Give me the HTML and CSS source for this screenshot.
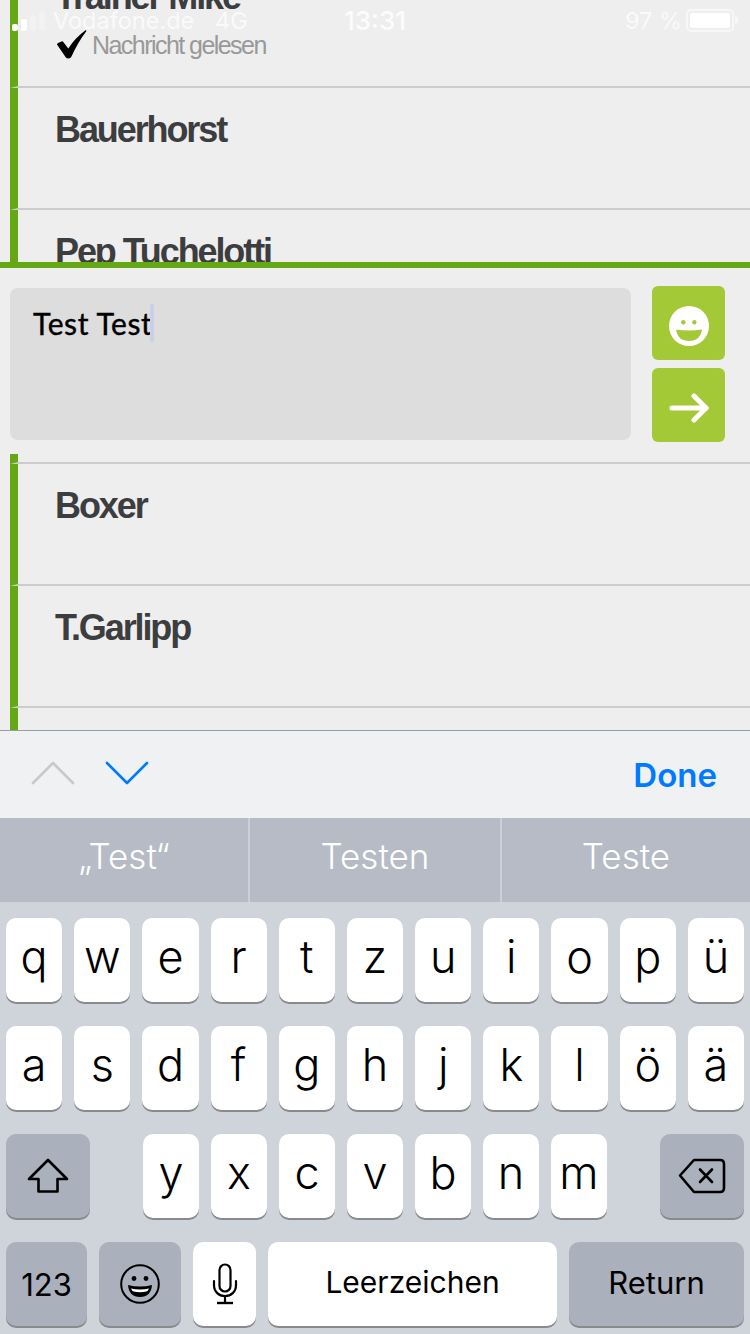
FILE: index.html
```html
<!DOCTYPE html>
<html lang="de">
<head>
    <meta charset="UTF-8">
    <meta name="viewport" content="width=device-width, initial-scale=1.0">
    <title>Nachrichten</title>
    <link rel="stylesheet" href="styles.css">
</head>
<body>
    <div class="screen">
        <!-- List above the compose box -->
        <div class="list-top">
            <div class="list-inner">
                <div class="row row-first">
                    <div class="name">Trainer Mike</div>
                    <div class="read-state">
                        <svg class="check" width="30" height="30" viewBox="0 0 30 30">
                            <path d="M0 14.5 Q0 13.5 1 13 L4.5 11.5 Q5.5 11 6.3 12 L11.3 18.5 Q18 8 28.5 0.3 Q29.6 0 29.3 1.2 Q21 12 14.5 26.5 Q13.5 28.6 11.5 28.6 Q9.5 28.6 8.5 27 Z" fill="#000"/>
                        </svg>
                        <span class="read-text">Nachricht gelesen</span>
                    </div>
                </div>
                <div class="row"><div class="name">Bauerhorst</div></div>
                <div class="row"><div class="name">Pep Tuchelotti</div></div>
            </div>
        </div>

        <!-- Compose box -->
        <div class="compose">
            <div class="input-box">
                <span class="input-text">Test Test</span><span class="caret"></span>
            </div>
            <div class="compose-buttons">
                <div class="green-btn">
                    <svg width="40" height="40" viewBox="0 0 40 40">
                        <circle cx="20" cy="20" r="20" fill="#fff"/>
                        <circle cx="14.3" cy="16.3" r="2.2" fill="#a4c936"/>
                        <circle cx="25.3" cy="16.3" r="2.2" fill="#a4c936"/>
                        <path d="M7 23.5 Q20 25.5 33 23.5 Q31 35 20 35 Q9 35 7 23.5 Z" fill="#a4c936"/>
                    </svg>
                </div>
                <div class="green-btn">
                    <svg width="40" height="30" viewBox="0 0 40 30" fill="none" stroke="#fff" stroke-width="5" stroke-linecap="round" stroke-linejoin="round">
                        <path d="M3 15 H37"/>
                        <path d="M25 3 L37 15 L25 27"/>
                    </svg>
                </div>
            </div>
        </div>

        <!-- List below the compose box -->
        <div class="list-bottom">
            <div class="row row-stub"></div>
            <div class="row"><div class="name">Boxer</div></div>
            <div class="row"><div class="name">T.Garlipp</div></div>
            <div class="row row-end"></div>
        </div>

        <!-- Keyboard accessory -->
        <div class="toolbar">
            <div class="arrows">
                <svg width="44" height="24" viewBox="0 0 44 24" fill="none" stroke="#c9c9cb" stroke-width="2.6" stroke-linecap="round" stroke-linejoin="round">
                    <path d="M2 22 L22 2 L42 22"/>
                </svg>
                <svg width="44" height="24" viewBox="0 0 44 24" fill="none" stroke="#007aff" stroke-width="2.6" stroke-linecap="round" stroke-linejoin="round">
                    <path d="M2 2 L22 22 L42 2"/>
                </svg>
            </div>
            <div class="done">Done</div>
        </div>

        <div class="suggestions">
            <div class="suggestion">„Test“</div>
            <div class="suggestion">Testen</div>
            <div class="suggestion">Teste</div>
        </div>

        <div class="keyboard">
            <div class="key-row key-grid">
                <div class="key">q</div><div class="key">w</div><div class="key">e</div><div class="key">r</div><div class="key">t</div><div class="key">z</div><div class="key">u</div><div class="key">i</div><div class="key">o</div><div class="key">p</div><div class="key">ü</div>
            </div>
            <div class="key-row key-grid">
                <div class="key">a</div><div class="key">s</div><div class="key">d</div><div class="key">f</div><div class="key">g</div><div class="key">h</div><div class="key">j</div><div class="key">k</div><div class="key">l</div><div class="key">ö</div><div class="key">ä</div>
            </div>
            <div class="key-row key-row-3">
                <div class="key key-dark key-side">
                    <svg width="42" height="36" viewBox="0 0 42 36" fill="none" stroke="#000" stroke-width="2.6" stroke-linejoin="round">
                        <path d="M21 2 L2 21 H11.5 V33.5 H30.5 V21 H40 Z"/>
                    </svg>
                </div>
                <div class="letters">
                    <div class="key">y</div><div class="key">x</div><div class="key">c</div><div class="key">v</div><div class="key">b</div><div class="key">n</div><div class="key">m</div>
                </div>
                <div class="key key-dark key-side">
                    <svg width="48" height="36" viewBox="0 0 48 36" fill="none" stroke="#000" stroke-width="2.6" stroke-linejoin="round" stroke-linecap="round">
                        <path d="M2 17.5 L16 2 H42 Q46 2 46 6 V30 Q46 34 42 34 H16 Z"/>
                        <path d="M22 11.5 L34 24 M34 11.5 L22 24"/>
                    </svg>
                </div>
            </div>
            <div class="key-row key-row-4">
                <div class="key key-dark key-123">123</div>
                <div class="key key-dark key-emoji">
                    <svg width="42" height="42" viewBox="0 0 42 42" fill="none">
                        <circle cx="21" cy="21" r="18.8" stroke="#000" stroke-width="2"/>
                        <circle cx="15" cy="15.5" r="2.4" fill="#000"/>
                        <circle cx="27" cy="15.5" r="2.4" fill="#000"/>
                        <path d="M9 22 Q21 25 33 22 Q32 34 21 34 Q10 34 9 22 Z" fill="#000"/>
                        <path d="M12 25.5 Q21 27.5 30 25.5 Q29 28 27.5 28.5 Q21 30 14.5 28.5 Q13 28 12 25.5 Z" fill="#fff"/>
                    </svg>
                </div>
                <div class="key key-mic">
                    <svg width="26" height="42" viewBox="0 0 26 42" fill="none" stroke="#000" stroke-width="2.2" stroke-linecap="round">
                        <rect x="7.5" y="1.5" width="11" height="27" rx="5.5"/>
                        <path d="M2 18 V22 C2 29 7 33 13 33 C19 33 24 29 24 22 V18"/>
                        <path d="M13 33 V39"/>
                        <path d="M5 40 H21" stroke-width="2.4" stroke-linecap="butt"/>
                    </svg>
                </div>
                <div class="key key-space">Leerzeichen</div>
                <div class="key key-dark key-return">Return</div>
            </div>
        </div>

        <!-- Status bar lies over the list -->
        <div class="status-bar">
            <div class="status-left">
                <div class="signal">
                    <span class="bar bar-1"></span>
                    <span class="bar bar-2"></span>
                    <span class="bar bar-3"></span>
                    <span class="bar bar-4"></span>
                </div>
                <span class="carrier">Vodafone.de</span>
                <span class="network">4G</span>
            </div>
            <div class="status-time">13:31</div>
            <div class="status-right">
                <span class="percent">97 %</span>
                <div class="battery"><div class="battery-fill"></div></div>
                <div class="battery-nub"></div>
            </div>
        </div>
    </div>
</body>
</html>
```

FILE: styles.css
```css
body {
    margin: 0;
    padding: 0;
    background-color: #eeeeee;
    font-family: "Liberation Sans", Arial, sans-serif;
}
.screen {
    position: relative;
    width: 750px;
    height: 1334px;
    overflow: hidden;
    display: flex;
    flex-direction: column;
    background-color: #eeeeee;
}

/* status bar */
.status-bar {
    position: absolute;
    top: 0;
    left: 0;
    width: 750px;
    height: 40px;
    display: grid;
    grid-template-columns: 1fr auto 1fr;
    align-items: center;
    font-family: Inter, "Liberation Sans", sans-serif;
    font-size: 23.5px;
    color: rgba(255,255,255,0.72);
}
.status-left {
    display: flex;
    align-items: center;
    padding-left: 12px;
}
.signal {
    display: flex;
    align-items: flex-end;
    gap: 3px;
    width: 41px;
    height: 20px;
    margin-top: 2px;
}
.bar {
    width: 6px;
    border-radius: 2px;
    background-color: rgba(255,255,255,0.25);
}
.bar-1 { height: 7px; background-color: #fff; }
.bar-2 { height: 12px; background-color: #fff; }
.bar-3 { height: 16px; }
.bar-4 { height: 20px; }
.carrier {
    width: 162px;
}
.status-time {
    font-size: 26px;
    color: rgba(255,255,255,0.85);
    font-weight: 500;
}
.status-right {
    display: flex;
    align-items: center;
    justify-content: flex-end;
    padding-right: 12px;
}
.percent {
    margin-right: 4px;
}
.battery {
    box-sizing: border-box;
    width: 48px;
    height: 23px;
    border: 2px solid rgba(255,255,255,0.5);
    border-radius: 5px;
    padding: 2px;
}
.battery-fill {
    height: 100%;
    background-color: #fff;
    border-radius: 2px;
}
.battery-nub {
    width: 3px;
    height: 8px;
    margin-left: 1px;
    background-color: rgba(255,255,255,0.5);
    border-radius: 0 3px 3px 0;
}

/* message lists */
.list-top {
    height: 262px;
    overflow: hidden;
    flex-shrink: 0;
}
.list-inner {
    margin-top: -45px;
}
.row {
    box-sizing: border-box;
    height: 122px;
    margin-left: 10px;
    padding: 20px 0 0 37px;
    border-left: 8px solid #64a814;
    border-bottom: 2px solid #cccccc;
}
.row-first {
    height: 133px;
}
.row-stub {
    height: 10px;
    padding: 0;
}
.row-end {
    height: 22px;
    padding: 0;
    border-bottom: 0;
}
.name {
    font-size: 36px;
    line-height: 44px;
    font-weight: bold;
    letter-spacing: -2.1px;
    color: #3c3d3f;
}
.read-state {
    display: flex;
    align-items: center;
    gap: 5px;
    margin-top: 11px;
}
.check {
    margin-left: 2px;
}
.read-text {
    font-size: 25px;
    letter-spacing: -1.55px;
    color: #999999;
}

/* compose box */
.compose {
    box-sizing: border-box;
    height: 192px;
    flex-shrink: 0;
    display: flex;
    gap: 21px;
    padding: 18px 25px 0 10px;
    border-top: 6px solid #64a814;
    background-color: #eeeeee;
}
.input-box {
    box-sizing: border-box;
    width: 621px;
    height: 152px;
    margin-top: 2px;
    padding: 16px 0 0 23px;
    display: flex;
    align-items: flex-start;
    background-color: #dddddd;
    border-radius: 8px;
}
.input-text {
    font-family: Lato, sans-serif;
    font-size: 30px;
    line-height: 38px;
    letter-spacing: 0.6px;
    color: #000;
    -webkit-text-stroke: 0.4px #000;
}
.caret {
    width: 4px;
    height: 38px;
    margin-left: -2px;
    background-color: #c9cfe6;
    border-radius: 2px;
}
.compose-buttons {
    display: flex;
    flex-direction: column;
    gap: 8px;
}
.green-btn {
    box-sizing: border-box;
    width: 73px;
    height: 74px;
    padding-top: 6px;
    display: flex;
    align-items: center;
    justify-content: center;
    background-color: #a4c936;
    border-radius: 6px;
}

.list-bottom {
    height: 276px;
    flex-shrink: 0;
}

/* keyboard */
.toolbar {
    box-sizing: border-box;
    height: 88px;
    flex-shrink: 0;
    display: flex;
    align-items: center;
    justify-content: space-between;
    padding: 0 33px 0 31px;
    border-top: 1px solid #999ea5;
    background-color: #f0f1f3;
}
.arrows {
    display: flex;
    gap: 30px;
    margin-top: -3px;
}
.done {
    font-family: Inter, "Liberation Sans", sans-serif;
    font-size: 33px;
    font-weight: 600;
    color: #007aff;
}
.suggestions {
    height: 84px;
    flex-shrink: 0;
    display: grid;
    grid-template-columns: 250px 252px 248px;
    background-color: #b6bbc5;
}
.suggestion {
    box-sizing: border-box;
    padding-bottom: 8px;
    display: flex;
    align-items: center;
    justify-content: center;
    border-right: 2px solid #ccd0d7;
    font-family: Inter, "Liberation Sans", sans-serif;
    font-size: 35px;
    font-weight: 300;
    color: #fff;
}
.suggestion:last-child {
    border-right: 0;
}
.keyboard {
    flex: 1;
    display: flex;
    flex-direction: column;
    gap: 24px;
    padding: 16px 6px 0;
    background-color: #cfd3da;
}
.key-row {
    height: 84px;
}
.key-grid {
    display: grid;
    grid-template-columns: repeat(11, 1fr);
    gap: 12px;
}
.key-row-3, .key-row-4 {
    display: flex;
    gap: 12px;
}
.key-row-3 {
    justify-content: space-between;
}
.letters {
    display: flex;
    gap: 12px;
}
.letters .key {
    width: 56px;
}
.key {
    box-sizing: border-box;
    padding-bottom: 8px;
    display: flex;
    align-items: center;
    justify-content: center;
    background-color: #fff;
    border-radius: 10px;
    box-shadow: 0 2px 0 #898a8d;
    font-family: Inter, "Liberation Sans", sans-serif;
    font-size: 45px;
    font-weight: 300;
    color: #000;
}
.key-dark {
    background-color: #aab1bc;
}
.key-side {
    width: 84px;
    padding-bottom: 0;
}
.key-emoji, .key-mic {
    padding-bottom: 0;
}
.key-123 { width: 81px; font-size: 31px; padding-bottom: 0; }
.key-emoji { width: 82px; }
.key-mic { width: 63px; }
.key-space { width: 289px; font-size: 30px; padding-bottom: 4px; }
.key-return { width: 175px; font-size: 31px; padding-bottom: 4px; }
.key-row-4 .key { font-weight: 400; }
```
